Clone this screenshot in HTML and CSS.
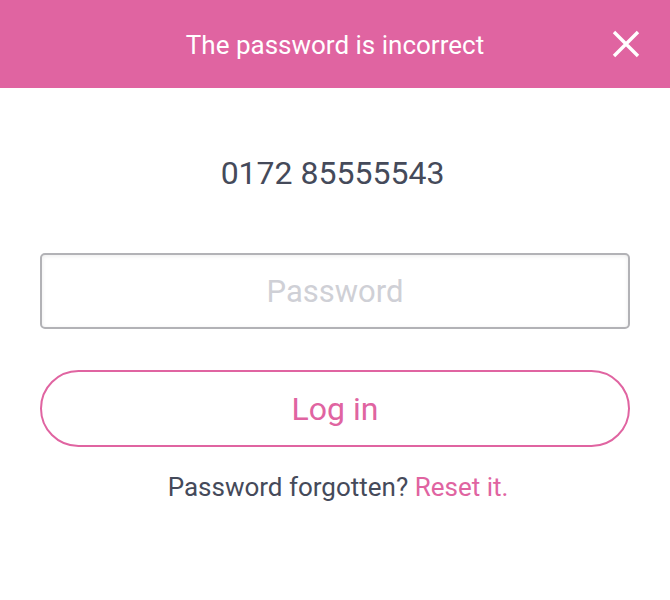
FILE: index.html
```html
<!DOCTYPE html>
<html lang="en">
<head>
<meta charset="utf-8">
<title>Log in</title>
<link rel="stylesheet" href="styles.css">
</head>
<body>
<div class="banner">
  <span class="banner-text">The password is incorrect</span>
  <button class="close" aria-label="Close">
    <svg width="28" height="28" viewBox="0 0 28 28"><path d="M2 2L26 26M26 2L2 26" stroke="#fff" stroke-width="3.4" fill="none"/></svg>
  </button>
</div>
<main class="content">
  <div class="phone">0172 85555543</div>
  <input class="password" type="password" placeholder="Password">
  <button class="login">Log in</button>
  <p class="forgot">Password forgotten? <a href="#" class="reset">Reset it.</a></p>
</main>
</body>
</html>
```
FILE: styles.css
```css
* { box-sizing: border-box; }
html, body { margin: 0; padding: 0; background: #fff; }
body { font-family: Roboto, "Noto Sans", sans-serif; }
.banner {
  position: relative;
  height: 88px;
  background: #e064a1;
  display: flex;
  align-items: center;
  justify-content: center;
}
.banner-text {
  color: #fff;
  font-size: 26px;
  line-height: 1;
  margin-top: 2px;
}
.close {
  position: absolute;
  right: 30px;
  top: 30px;
  width: 28px;
  height: 28px;
  padding: 0;
  border: 0;
  background: none;
  display: block;
}
.close svg { display: block; }
.content {
  padding: 0 40px;
  display: flex;
  flex-direction: column;
  align-items: stretch;
}
.phone {
  margin-top: 65px;
  text-align: center;
  font-size: 32px;
  line-height: 40px;
  color: #454a5a;
  padding-right: 5px;
}
.password {
  margin-top: 60px;
  height: 76px;
  width: 100%;
  border: 2px solid #b2b2b6;
  border-radius: 5px;
  box-shadow: inset 0 1px 4px rgba(0,0,0,0.08);
  font-family: Roboto, sans-serif;
  font-size: 31px;
  text-align: center;
  color: #454a5a;
  outline: none;
  padding: 0 16px;
}
.password::placeholder { color: #cfd0d6; }
.login {
  margin-top: 41px;
  height: 77px;
  width: 100%;
  border: 2px solid #e064a1;
  border-radius: 40px;
  background: #fff;
  color: #e064a1;
  font-family: Roboto, sans-serif;
  font-size: 32px;
  padding: 0;
}
.forgot {
  margin: 24px 0 0;
  padding-left: 6px;
  text-align: center;
  font-size: 26px;
  line-height: 32px;
  color: #454a5a;
}
.reset { color: #e064a1; text-decoration: none; }
```
